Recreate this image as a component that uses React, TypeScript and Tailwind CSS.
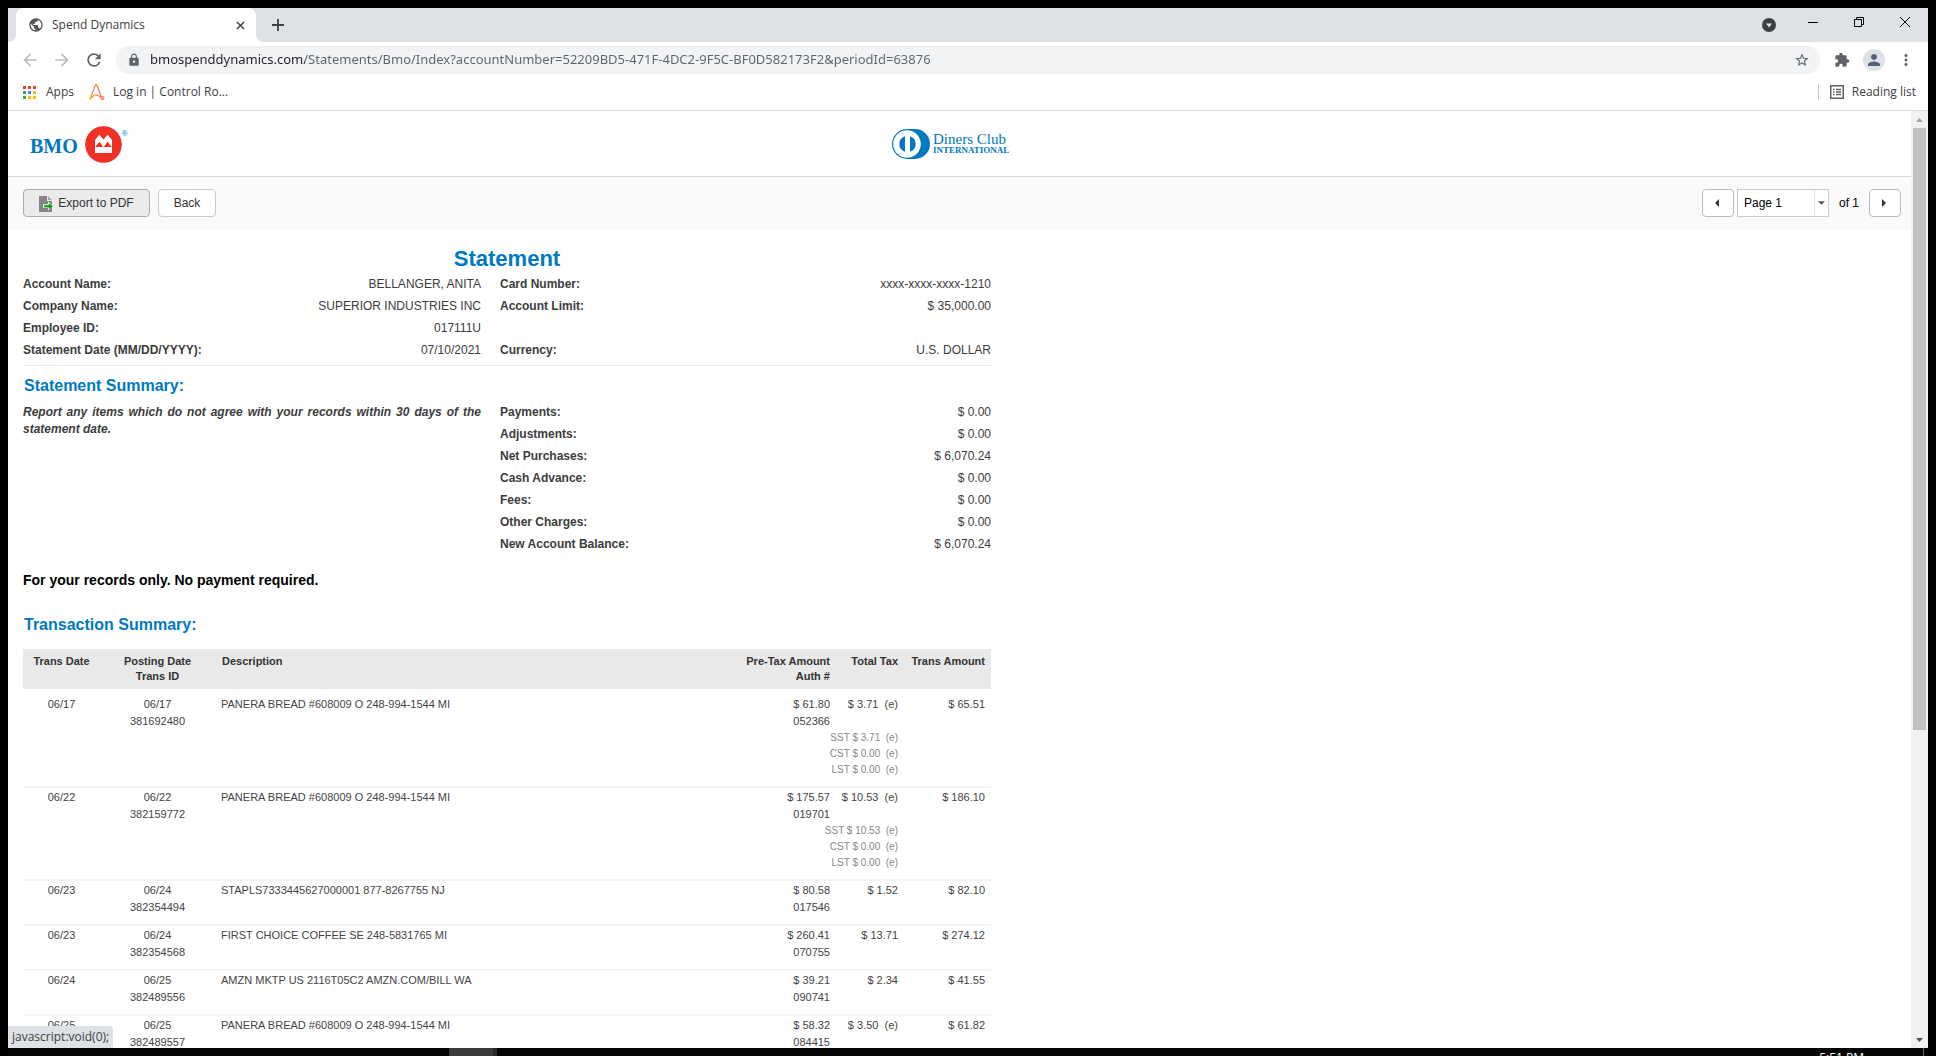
import React from "react";
import {
  MdArrowBack,
  MdArrowForward,
  MdRefresh,
  MdLock,
  MdStarBorder,
  MdExtension,
  MdPerson,
  MdMoreVert,
  MdPublic,
} from "react-icons/md";

type Transaction = {
  date: string;
  posted: string;
  id: string;
  description: string;
  preTax: string;
  auth: string;
  tax: string;
  total: string;
  estimated?: boolean;
  breakdown?: string[];
};

const transactions: Transaction[] = [
  {
    date: "06/17", posted: "06/17", id: "381692480",
    description: "PANERA BREAD #608009 O 248-994-1544 MI",
    preTax: "$ 61.80", auth: "052366", tax: "$ 3.71", total: "$ 65.51", estimated: true,
    breakdown: ["SST $ 3.71", "CST $ 0.00", "LST $ 0.00"],
  },
  {
    date: "06/22", posted: "06/22", id: "382159772",
    description: "PANERA BREAD #608009 O 248-994-1544 MI",
    preTax: "$ 175.57", auth: "019701", tax: "$ 10.53", total: "$ 186.10", estimated: true,
    breakdown: ["SST $ 10.53", "CST $ 0.00", "LST $ 0.00"],
  },
  {
    date: "06/23", posted: "06/24", id: "382354494",
    description: "STAPLS7333445627000001 877-8267755 NJ",
    preTax: "$ 80.58", auth: "017546", tax: "$ 1.52", total: "$ 82.10",
  },
  {
    date: "06/23", posted: "06/24", id: "382354568",
    description: "FIRST CHOICE COFFEE SE 248-5831765 MI",
    preTax: "$ 260.41", auth: "070755", tax: "$ 13.71", total: "$ 274.12",
  },
  {
    date: "06/24", posted: "06/25", id: "382489556",
    description: "AMZN MKTP US 2116T05C2 AMZN.COM/BILL WA",
    preTax: "$ 39.21", auth: "090741", tax: "$ 2.34", total: "$ 41.55",
  },
  {
    date: "06/25", posted: "06/25", id: "382489557",
    description: "PANERA BREAD #608009 O 248-994-1544 MI",
    preTax: "$ 58.32", auth: "084415", tax: "$ 3.50", total: "$ 61.82", estimated: true,
  },
];

const accountFields: [string, string][] = [
  ["Account Name:", "BELLANGER, ANITA"],
  ["Company Name:", "SUPERIOR INDUSTRIES INC"],
  ["Employee ID:", "017111U"],
  ["Statement Date (MM/DD/YYYY):", "07/10/2021"],
];

const cardFields: [string, string][] = [
  ["Card Number:", "xxxx-xxxx-xxxx-1210"],
  ["Account Limit:", "$ 35,000.00"],
  ["", ""],
  ["Currency:", "U.S. DOLLAR"],
];

const summaryFields: [string, string][] = [
  ["Payments:", "$ 0.00"],
  ["Adjustments:", "$ 0.00"],
  ["Net Purchases:", "$ 6,070.24"],
  ["Cash Advance:", "$ 0.00"],
  ["Fees:", "$ 0.00"],
  ["Other Charges:", "$ 0.00"],
  ["New Account Balance:", "$ 6,070.24"],
];

function Fields({ items }: { items: [string, string][] }) {
  return (
    <dl>
      {items.map(([label, value], i) => (
        <div key={i} className="flex h-[22px] items-center justify-between">
          <dt className="font-bold">{label}</dt>
          <dd>{value}</dd>
        </div>
      ))}
    </dl>
  );
}

function TabStrip() {
  return (
    <div className="flex h-[34px] shrink-0 bg-[#dee1e6]">
      <div className="w-2 bg-white">
        <div className="h-full rounded-br-lg bg-[#dee1e6]" />
      </div>
      <div className="flex w-60 items-center rounded-t-lg bg-white pr-2 pl-3">
        <MdPublic className="size-4 text-[#55595e]" />
        <span className="ml-2 flex-1 text-xs text-[#3c4043]">Spend Dynamics</span>
        <button aria-label="Close tab" className="flex size-4 items-center justify-center">
          <svg viewBox="0 0 10 10" className="size-[9px]" stroke="#3c4043" strokeWidth="1.6">
            <path d="M1 1l8 8M9 1l-8 8" />
          </svg>
        </button>
      </div>
      <div className="w-2 bg-white">
        <div className="h-full rounded-bl-lg bg-[#dee1e6]" />
      </div>
      <button aria-label="New tab" className="flex w-7 items-center justify-center">
        <svg viewBox="0 0 12 12" className="size-3" stroke="#3c4043" strokeWidth="1.8">
          <path d="M6 0v12M0 6h12" />
        </svg>
      </button>
      <div className="flex-1" />
      <button aria-label="Search tabs" className="mr-[14px] flex items-center">
        <svg viewBox="0 0 14 14" className="size-[14px]">
          <circle cx="7" cy="7" r="7" fill="#3c4043" />
          <path d="M4 5.5h6L7 9.5z" fill="#dee1e6" />
        </svg>
      </button>
      <div className="flex h-7">
        <button aria-label="Minimize" className="flex w-[46px] items-center justify-center">
          <svg viewBox="0 0 10 10" className="size-[10px]" stroke="#000">
            <path d="M0 5.5h10" />
          </svg>
        </button>
        <button aria-label="Restore" className="flex w-[46px] items-center justify-center">
          <svg viewBox="0 0 10 10" className="size-[10px]" fill="none" stroke="#000">
            <path d="M.5 2.5h7v7h-7zM2.5 2.5v-2h7v7h-2" />
          </svg>
        </button>
        <button aria-label="Close" className="flex w-[46px] items-center justify-center">
          <svg viewBox="0 0 10 10" className="size-[10px]" stroke="#000">
            <path d="M0 0l10 10M10 0L0 10" />
          </svg>
        </button>
      </div>
    </div>
  );
}

function AddressBar() {
  return (
    <div className="flex h-9 shrink-0 items-center bg-white pr-[13px] pl-3">
      <div className="flex w-24 items-center gap-3">
        <button aria-label="Back" className="text-[#babcbe]"><MdArrowBack className="size-5" /></button>
        <button aria-label="Forward" className="text-[#babcbe]"><MdArrowForward className="size-5" /></button>
        <button aria-label="Reload" className="text-[#5f6368]"><MdRefresh className="size-5" /></button>
      </div>
      <div className="flex h-7 flex-1 items-center rounded-full bg-[#f1f3f4] pr-[10px] pl-[11px]">
        <MdLock className="size-[14px] text-[#5f6368]" />
        <input
          aria-label="Address"
          defaultValue="bmospenddynamics.com/Statements/Bmo/Index?accountNumber=52209BD5-471F-4DC2-9F5C-BF0D582173F2&periodId=63876"
          className="ml-[9px] flex-1 bg-linear-to-r from-[#202124] from-[155px] to-[#5f6368] to-[155px] bg-clip-text font-['Noto_Sans',sans-serif] text-[13px] text-transparent outline-none"
        />
        <button aria-label="Bookmark this page"><MdStarBorder className="size-4 text-[#5f6368]" /></button>
      </div>
      <button aria-label="Extensions" className="ml-[14px] text-[#5f6368]"><MdExtension className="size-4" /></button>
      <button aria-label="Profile" className="ml-[13px] flex size-[22px] items-center justify-center rounded-full bg-[#dee1e6] text-[#55617a]">
        <MdPerson className="size-[18px]" />
      </button>
      <button aria-label="Menu" className="ml-3 text-[#5f6368]"><MdMoreVert className="size-[18px]" /></button>
    </div>
  );
}

const appColors = [
  "#ea4335", "#ea4335", "#ea4335",
  "#34a853", "#4285f4", "#fbbc04",
  "#34a853", "#fbbc04", "#fbbc04",
];

function BookmarksBar() {
  return (
    <nav aria-label="Bookmarks" className="flex h-[33px] shrink-0 items-center border-b border-[#d9dadd] bg-white pr-3 pb-1 pl-[15px] text-xs text-[#3c4043]">
      <a href="#apps" className="flex items-center gap-[10px]">
        <svg viewBox="0 0 13 13" className="size-[13px]">
          {appColors.map((fill, i) => (
            <rect key={i} x={(i % 3) * 5} y={Math.floor(i / 3) * 5} width="3" height="3" fill={fill} />
          ))}
        </svg>
        Apps
      </a>
      <a href="#control-room" className="ml-[15px] flex items-center gap-2">
        <svg viewBox="0 0 16 16" className="size-4" fill="none" strokeWidth="1.3">
          <defs>
            <linearGradient id="mark" x1="0" y1="1" x2="1" y2="0">
              <stop offset="0" stopColor="#fdb913" />
              <stop offset="0.5" stopColor="#f58a5b" />
              <stop offset="1" stopColor="#ee6a4c" />
            </linearGradient>
          </defs>
          <path d="M.8 15.5L6.3 1.2Q7 .2 7.8 1.2L12.3 12.6M1.2 15L5 11.2Q8 9.8 12.2 13.6" stroke="url(#mark)" />
          <circle cx="13.4" cy="14" r="1.4" stroke="#f0795c" />
        </svg>
        Log in | Control Ro...
      </a>
      <div className="flex-1" />
      <button className="flex items-center gap-2 border-l border-[#c6c9cd] pl-[11px]">
        <svg viewBox="0 0 14 14" className="size-[14px]" stroke="#5f6368" fill="none">
          <rect x=".75" y=".75" width="12.5" height="12.5" strokeWidth="1.5" />
          <path d="M3 4.5h1.5M3 7h1.5M3 9.5h1.5M6 4.5h5M6 7h5M6 9.5h5" strokeWidth="1.3" />
        </svg>
        Reading list
      </button>
    </nav>
  );
}

function BmoLogo() {
  return (
    <div className="flex items-center pt-px text-[#0079c1]">
      <span className="pt-1 font-['Liberation_Serif',serif] text-xl leading-5 font-bold">BMO</span>
      <svg viewBox="0 0 37 37" className="ml-[7px] size-[37px]">
        <circle cx="18.5" cy="18.5" r="18.3" fill="#ee3124" />
        <path d="M10 27V14l4.3-5.2 4.2 4.8 4.2-4.8L27 14v13z" fill="#fff" />
        <path d="M10.2 21l4.2-5.2L18.3 21zM18.7 21l3.9-5.2 4.2 5.2z" fill="#ee3124" />
      </svg>
      <sup className="self-start pt-2 text-[8px] leading-none">®</sup>
    </div>
  );
}

function DinersLogo() {
  return (
    <div className="flex items-center gap-[3px] text-[#0079c1]">
      <svg viewBox="0 0 38 30" className="h-[30px] w-[38px]">
        <path d="M15 0h8a15 15 0 0 1 0 30h-8a15 15 0 0 1 0-30z" fill="#0079c1" />
        <circle cx="15" cy="15" r="13.8" fill="#fff" />
        <path d="M13 7.2v15.6a8.2 8.2 0 0 1 0-15.6zM18 7.2v15.6a8.2 8.2 0 0 0 0-15.6z" fill="#0079c1" />
      </svg>
      <div className="w-[75px] font-['Liberation_Serif',serif] whitespace-nowrap">
        <div className="text-[15px] leading-[14px]">Diners Club</div>
        <div className="text-[9px] leading-[9px] font-bold">INTERNATIONAL</div>
      </div>
    </div>
  );
}

function Toolbar() {
  return (
    <div className="flex h-[53px] items-start bg-[#fafafa] pt-3 pr-[10px] pl-[15px] text-xs text-[#333]">
      <button className="flex h-7 w-[127px] items-center justify-center gap-[5px] rounded-[4px] border border-[#adadad] bg-[#ebebeb]">
        <svg viewBox="0 0 14 16" className="mt-[2px] h-4 w-[14px]">
          <path d="M0 0h8v5h5v11H0z" fill="#858585" />
          <path d="M9 0l4 4H9z" fill="#a5a5a5" />
          <path d="M4 8.2h5V5.6l5 4.4-5 4.4v-2.6H4z" fill="#fff" />
          <path d="M5 9.2h4.8V7.2L14 10.2l-4.2 3v-2H5z" fill="#0a9f0a" />
        </svg>
        Export to PDF
      </button>
      <button className="ml-2 h-7 w-[58px] rounded-[4px] border border-[#ccc] bg-white">Back</button>
      <div className="flex-1" />
      <button aria-label="Previous page" className="flex h-7 w-8 items-center justify-center rounded-[4px] border border-[#bbb] bg-white pr-[2px]">
        <svg viewBox="0 0 4 8" className="h-2 w-1"><path d="M4 0v8L0 4z" fill="#333" /></svg>
      </button>
      <div className="relative ml-[3px] h-7 w-[92px]">
        <select aria-label="Page" className="h-full w-full appearance-none border border-[#ccc] bg-white px-[6px] text-black">
          <option>Page 1</option>
        </select>
        <span className="pointer-events-none absolute inset-y-px right-px flex w-[14px] items-center justify-center border-l border-[#e0e0e0]">
          <svg viewBox="0 0 8 4" className="h-1 w-[7px]"><path d="M0 0h8L4 4z" fill="#555" /></svg>
        </span>
      </div>
      <span className="mx-[10px] leading-7 text-black">of 1</span>
      <button aria-label="Next page" className="flex h-7 w-8 items-center justify-center rounded-[4px] border border-[#bbb] bg-white pr-[2px]">
        <svg viewBox="0 0 4 8" className="h-2 w-1"><path d="M0 0v8l4-4z" fill="#333" /></svg>
      </button>
    </div>
  );
}

function TransactionTable() {
  return (
    <table className="w-full table-fixed text-[11px] leading-[17px] text-[#444]">
      <colgroup>
        <col className="w-[77px]" />
        <col className="w-[115px]" />
        <col />
        <col className="w-[100px]" />
        <col className="w-[68px]" />
        <col className="w-[93px]" />
      </colgroup>
      <thead>
        <tr className="h-10 bg-[#e9e9e9] align-top leading-[15px] text-[#333]">
          <th className="pt-[5px] text-center">Trans Date</th>
          <th className="pt-[5px] text-center">Posting Date<br />Trans ID</th>
          <th className="pt-[5px] pl-[7px] text-left">Description</th>
          <th className="pt-[5px] text-right">Pre-Tax Amount<br />Auth #</th>
          <th className="pt-[5px] text-right">Total Tax</th>
          <th className="pt-[5px] pr-[6px] text-right">Trans Amount</th>
        </tr>
      </thead>
      <tbody>
        <tr className="h-[6px]" />
        {transactions.map((t) => (
          <tr key={t.id} className="border-[#f4f4f4] align-top not-nth-2:border-t-2">
            <td className="pt-px text-center">{t.date}</td>
            <td className="pt-px text-center">{t.posted}<br />{t.id}</td>
            <td className="pt-px pl-[6px]">{t.description}</td>
            <td className="pt-px text-right">{t.preTax}<br />{t.auth}</td>
            <td className="pt-px pb-2 text-right whitespace-nowrap">
              <div className="h-[34px]">{t.tax}{t.estimated && "\u00a0 (e)"}</div>
              {t.breakdown && (
                <div className="flex flex-col items-end text-[10px] leading-4 text-[#888]">
                  {t.breakdown.map((line) => (
                    <span key={line}>{line}{"\u00a0 (e)"}</span>
                  ))}
                </div>
              )}
            </td>
            <td className="pt-px pr-[6px] text-right">{t.total}</td>
          </tr>
        ))}
      </tbody>
    </table>
  );
}

function Statement() {
  return (
    <main className="mt-[15px] ml-[15px] w-full max-w-[968px] text-xs text-[#3c3c3c]">
      <h1 className="h-7 text-center text-[22px] leading-7 font-bold text-[#0079c1]">Statement</h1>
      <section className="grid grid-cols-[458px_1fr] gap-x-[19px] border-b border-[#e8e8e8] pb-1">
        <Fields items={accountFields} />
        <Fields items={cardFields} />
      </section>
      <h2 className="pt-[10px] pb-[5px] pl-px text-base leading-5 font-bold text-[#0079c1]">Statement Summary:</h2>
      <section className="grid grid-cols-[458px_1fr] gap-x-[19px]">
        <p className="pt-[3px] text-justify leading-[17px] font-bold italic">
          Report any items which do not agree with your records within 30 days of the statement date.
        </p>
        <Fields items={summaryFields} />
      </section>
      <p className="mt-[15px] text-sm leading-5 font-bold text-black">For your records only. No payment required.</p>
      <h2 className="mt-[25px] mb-[14px] pl-px text-base leading-5 font-bold text-[#0079c1]">Transaction Summary:</h2>
      <TransactionTable />
    </main>
  );
}

function Scrollbar() {
  return (
    <div className="flex w-[17px] shrink-0 flex-col items-center bg-[#f1f1f1]">
      <div className="flex h-[17px] items-center">
        <svg viewBox="0 0 7 4" className="h-1 w-[7px]"><path d="M0 4h7L3.5 0z" fill="#a3a3a3" /></svg>
      </div>
      <div className="w-[13px] flex-1">
        <div className="h-2/3 bg-[#c1c1c1]" />
      </div>
      <div className="flex h-[17px] items-center">
        <svg viewBox="0 0 7 4" className="h-1 w-[7px]"><path d="M0 0h7L3.5 4z" fill="#505050" /></svg>
      </div>
    </div>
  );
}

export default function App() {
  return (
    <div className="flex h-screen flex-col overflow-hidden bg-black px-2 pt-2 font-['Open_Sans',sans-serif]">
      <TabStrip />
      <AddressBar />
      <BookmarksBar />
      <div className="relative flex min-h-0 flex-1 bg-white">
        <div className="flex-1 overflow-hidden font-['Liberation_Sans',sans-serif]">
          <header className="grid h-[66px] grid-cols-[1fr_auto_1fr] items-center border-b border-[#d9dadd] pr-[41px] pl-[22px]">
            <BmoLogo />
            <DinersLogo />
          </header>
          <Toolbar />
          <Statement />
        </div>
        <Scrollbar />
        <div className="absolute bottom-0 left-0 rounded-tr bg-[#dee1e6] py-[3px] pr-1 pl-1 text-xs text-[#3c4043]">
          javascript:void(0);
        </div>
      </div>
      <footer className="flex h-2 shrink-0 items-start overflow-hidden bg-[#050505]">
        <div className="ml-[441px] h-2 w-11 bg-[#3b3b3b]" />
        <div className="h-2 w-1 bg-[#2a2a2a]" />
        <div className="flex-1" />
        <time className="mr-[59px] pt-1 text-xs leading-3 text-white">5:51 PM</time>
        <div className="mr-1 h-2 w-px bg-[#666]" />
      </footer>
    </div>
  );
}
